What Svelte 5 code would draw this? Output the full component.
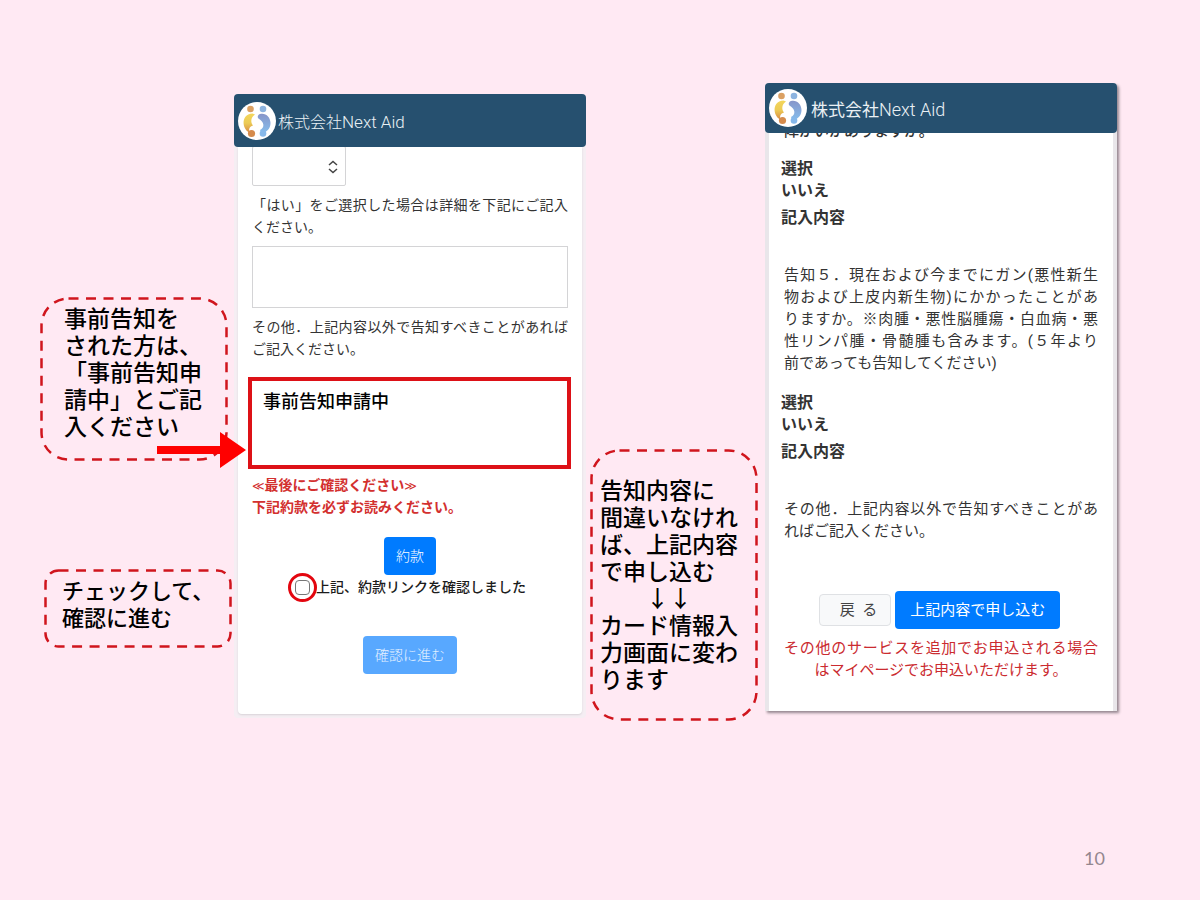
<script>
  let detail = $state('');
  let other = $state('事前告知申請中');
  let agreed = $state(false);
  let answer = $state('');

  const cancerQuestion = [
    '告知５．現在および今までにガン(悪性新生',
    '物および上皮内新生物)にかかったことがあ',
    'りますか。※肉腫・悪性脳腫瘍・白血病・悪',
    '性リンパ腫・骨髄腫も含みます。(５年より',
    '前であっても告知してください)'
  ];

  const otherQuestion = ['その他．上記内容以外で告知すべきことがあ', 'ればご記入ください。'];
</script>

{#snippet logo()}
  <svg class="logo" viewBox="0 0 38 38" aria-hidden="true">
    <defs>
      <linearGradient id="warm" x1="0" y1="0" x2="0" y2="1">
        <stop offset="0" stop-color="#f3d65c" />
        <stop offset="0.5" stop-color="#eccb55" />
        <stop offset="1" stop-color="#d98c45" />
      </linearGradient>
      <linearGradient id="cool" x1="0" y1="0" x2="0" y2="1">
        <stop offset="0" stop-color="#8795c9" />
        <stop offset="1" stop-color="#86bdec" />
      </linearGradient>
    </defs>
    <circle cx="19" cy="19" r="19" fill="#fff" />
    <circle cx="12.500" cy="7" r="3.300" fill="#dba062" />
    <circle cx="25" cy="7" r="3.300" fill="#8db4e0" />
    <path d="M14.500 11.500C8 12 5.200 16.500 5.600 21.500C6 26 8.500 29.500 11.500 30.500C10.500 27 11.500 24.500 15 23.500C12.500 20.500 12.500 15.500 17 12.500Z" fill="url(#warm)" />
    <path d="M22 12C27.500 10.500 32.500 15 32.500 21C32.500 26 29.500 29.500 26 30.500C24 31 22.500 29.500 22 28C27 25.500 26.500 20 20.500 16.500C19 15 20 12.500 22 12Z" fill="url(#cool)" />
    <circle cx="13.500" cy="31.500" r="3.600" fill="#d58b4c" />
    <circle cx="25" cy="31.500" r="3.300" fill="#86b8ea" />
  </svg>
{/snippet}

{#snippet outline(radius)}
  <svg class="outline" aria-hidden="true">
    <rect x="1.500" y="1.500" rx={radius} ry={radius} />
  </svg>
{/snippet}

<main class="slide">
  <div class="board">
    <div class="notes">
      <aside class="callout first">
        {@render outline(27)}
        <p>事前告知を<br />された方は、<br />「事前告知申<br />請中」とご記<br />入ください</p>
        <svg class="arrow" viewBox="0 0 89 36" aria-hidden="true">
          <path d="M0 14H63V0L89 18L63 36V22H0Z" fill="#f00" />
        </svg>
      </aside>
      <aside class="callout second">
        {@render outline(13)}
        <p>チェックして、<br />確認に進む</p>
      </aside>
    </div>

    <section class="phone form">
      <header>{@render logo()}<span>株式会社<span class="latin">Next Aid</span></span></header>
      <div class="sheet">
        <div class="picker">
          <select aria-label="選択" bind:value={answer}>
            <option value=""></option>
            <option>はい</option>
            <option>いいえ</option>
          </select>
          <svg viewBox="0 0 12 14" aria-hidden="true">
            <path d="M2 5L6 1.500L10 5M2 9L6 12.500L10 9" />
          </svg>
        </div>
        <label class="question" for="detail">「はい」をご選択した場合は詳細を下記にご記入ください。</label>
        <textarea id="detail" class="plain" bind:value={detail}></textarea>
        <label class="question" for="other">その他．上記内容以外で告知すべきことがあればご記入ください。</label>
        <textarea id="other" class="marked" bind:value={other}></textarea>
        <p class="notice"><span class="bracket">≪</span>最後にご確認ください<span class="bracket">≫</span><br />下記約款を必ずお読みください。</p>
        <button type="button" class="primary terms">約款</button>
        <div class="agree">
          <span class="ring"><input id="agree" type="checkbox" bind:checked={agreed} /></span>
          <label for="agree">上記、約款リンクを確認しました</label>
        </div>
        <button type="button" class="primary next" disabled={!agreed}>確認に進む</button>
      </div>
    </section>

    <aside class="callout third">
      {@render outline(28)}
      <p>告知内容に<br />間違いなけれ<br />ば、上記内容<br />で申し込む<br />　　↓↓<br />カード情報入<br />力画面に変わ<br />ります</p>
    </aside>

    <section class="phone confirm">
      <header>{@render logo()}<span>株式会社<span class="latin">Next Aid</span></span></header>
      <div class="sheet">
        <p class="scrolled">障がいがありますか。</p>
        <dl>
          <dt>選択</dt>
          <dd>いいえ</dd>
          <dt class="entry">記入内容</dt>
        </dl>
        <p class="item">
          {#each cancerQuestion as line}<span class="line">{line}</span>{/each}
        </p>
        <dl>
          <dt>選択</dt>
          <dd>いいえ</dd>
          <dt class="entry">記入内容</dt>
        </dl>
        <p class="item">
          {#each otherQuestion as line}<span class="line">{line}</span>{/each}
        </p>
        <div class="actions">
          <button type="button" class="back">戻&ensp;る</button>
          <button type="button" class="primary apply">上記内容で申し込む</button>
        </div>
        <p class="extra">その他のサービスを追加でお申込される場合はマイページでお申込いただけます。</p>
      </div>
    </section>
  </div>
  <footer>10</footer>
</main>

<style>
  :global(body) {
    margin: 0;
    background: #ffe9f3;
  }

  .slide {
    box-sizing: border-box;
    min-height: 100vh;
    padding: 83px 83px 29px 40px;
    display: flex;
    flex-direction: column;
    font-family: Roboto, 'Noto Sans CJK JP', sans-serif;
    color: #333;
  }

  .slide *,
  .slide *::before {
    box-sizing: border-box;
  }

  p,
  dl,
  dd {
    margin: 0;
  }

  .board {
    display: grid;
    grid-template-columns: 188fr 352fr 167fr 352fr;
    column-gap: 6px;
    align-items: start;
  }

  .notes {
    display: flex;
    flex-direction: column;
    gap: 108px;
    padding-top: 214px;
  }

  .callout {
    position: relative;
    font-size: 23px;
    line-height: 27px;
    font-weight: 500;
    color: #000;
    white-space: nowrap;
  }

  .first {
    padding: 9px 0 20px 24px;
  }

  .second {
    margin: 0 -4px 0 4px;
    padding: 9px 0 16px 18px;
    font-size: 22px;
  }

  .third {
    margin: 366px 1px 0 -2px;
    padding: 29px 0 27px 10px;
  }

  .outline {
    position: absolute;
    inset: 0;
    width: 100%;
    height: 100%;
  }

  .outline rect {
    width: calc(100% - 3px);
    height: calc(100% - 3px);
    fill: none;
    stroke: #d0151d;
    stroke-width: 2.5;
    stroke-dasharray: 10 7.5;
  }

  .arrow {
    position: absolute;
    z-index: 3;
    right: -18px;
    bottom: -7px;
    width: 89px;
    height: 36px;
  }

  .phone header {
    position: relative;
    z-index: 2;
    display: flex;
    align-items: center;
    gap: 4px;
    padding-left: 4px;
    border-radius: 4px;
    background: #26506f;
    color: #eaf0f4;
  }

  .logo {
    width: 38px;
    height: 38px;
  }

  .latin {
    font-weight: 300;
  }

  .sheet {
    margin: 0 4px;
    background: #fff;
  }

  .form {
    margin-top: 11px;
    padding-bottom: 4px;
    background: #f5eef3;
    border-radius: 4px;
  }

  .form header {
    height: 53px;
    gap: 2px;
    font-size: 16px;
    font-weight: 300;
  }

  .form .latin {
    font-size: 17px;
  }

  .form .sheet {
    display: flex;
    flex-direction: column;
    padding: 0 14px 40px;
    border-radius: 0 0 4px 4px;
    box-shadow: 0 1px 2px #d8d3d8;
    font-size: 14px;
    line-height: 22px;
  }

  .picker {
    position: relative;
    width: 94px;
    height: 40px;
    margin-top: -1px;
  }

  .picker select {
    appearance: none;
    width: 100%;
    height: 100%;
    border: 1px solid #d4d4d6;
    border-radius: 2px;
    background: #fff;
  }

  .picker svg {
    position: absolute;
    right: 7px;
    top: 14px;
    width: 12px;
    height: 14px;
    pointer-events: none;
    fill: none;
    stroke: #444;
    stroke-width: 1.5;
  }

  .question {
    margin: 8px 0;
    text-align: justify;
  }

  textarea {
    display: block;
    resize: none;
    background: #fff;
    font-family: inherit;
    border-radius: 0;
  }

  .plain {
    width: 100%;
    height: 62px;
    border: 1px solid #d4d4d6;
  }

  .marked {
    height: 92px;
    margin: 9px -3px 0 -4px;
    padding: 8px 11px;
    border: 4px solid #dd1117;
    font-size: 18px;
    line-height: 26px;
    font-weight: 500;
    color: #000;
  }

  .notice {
    margin-top: 5px;
    font-weight: 700;
    color: #d3302f;
  }

  .bracket {
    font-family: 'DejaVu Sans', sans-serif;
    font-size: 12px;
    line-height: 12px;
    font-weight: 400;
  }

  button {
    border: 0;
    border-radius: 4px;
    font-family: inherit;
    line-height: 22px;
    white-space: nowrap;
  }

  .primary {
    background: #007bff;
    color: #fff;
    padding: 8px 12px;
  }

  .terms,
  .next {
    align-self: center;
    font-size: 14px;
    font-weight: 300;
  }

  .terms {
    margin-top: 19px;
  }

  .next {
    margin-top: 38px;
  }

  .next:disabled {
    background: #58a8ff;
    color: #e4f1ff;
  }

  .agree {
    display: flex;
    align-items: center;
    align-self: center;
    height: 22px;
    margin-top: 1px;
    margin-right: 6px;
    font-weight: 500;
    color: #1c1c1c;
  }

  .ring {
    display: grid;
    place-items: center;
    width: 29px;
    height: 29px;
    margin-right: -1px;
    border: 3px solid #e3060f;
    border-radius: 50%;
  }

  .ring input {
    appearance: none;
    width: 15px;
    height: 15px;
    margin: 0;
    border: 1px solid #777;
    border-radius: 4px;
    background: #fff;
  }

  .ring input:checked {
    background: #007bff;
  }

  .confirm {
    background: #e9e6ea;
    border-radius: 4px 4px 0 0;
    box-shadow: 2px 2px 3px #94868e;
    clip-path: inset(0 -8px -8px 0);
  }

  .confirm header {
    height: 50px;
    font-size: 17px;
    font-weight: 400;
  }

  .confirm .latin {
    font-size: 18px;
  }

  .confirm .sheet {
    padding: 0 15px 30px 12px;
    font-size: 15px;
    line-height: 22px;
  }

  .scrolled {
    margin: -13px 0 16px 3px;
    font-weight: 500;
  }

  dl {
    font-size: 16px;
    font-weight: 700;
  }

  .entry {
    margin-top: 5px;
  }

  .item {
    margin: 35px 0 18px 3px;
  }

  .line {
    display: block;
    white-space: nowrap;
    text-align-last: justify;
  }

  .line:last-child {
    text-align-last: left;
  }

  .actions {
    display: flex;
    justify-content: center;
    align-items: center;
    gap: 4px;
    margin-top: 49px;
  }

  .back {
    height: 32px;
    padding: 0 13px 0 20px;
    border: 1px solid #dfe1e4;
    background: #f8f9fa;
    color: #444;
    font-size: 15px;
  }

  .apply {
    padding: 8px 15px;
    font-size: 15px;
  }

  .extra {
    margin: 8px 0 0 3px;
    text-align: justify;
    text-align-last: center;
    color: #cb2b30;
  }

  footer {
    margin-top: auto;
    padding-right: 12px;
    text-align: right;
    font-family: Lato, sans-serif;
    font-size: 18px;
    line-height: 26px;
    color: #94868e;
  }
</style>
